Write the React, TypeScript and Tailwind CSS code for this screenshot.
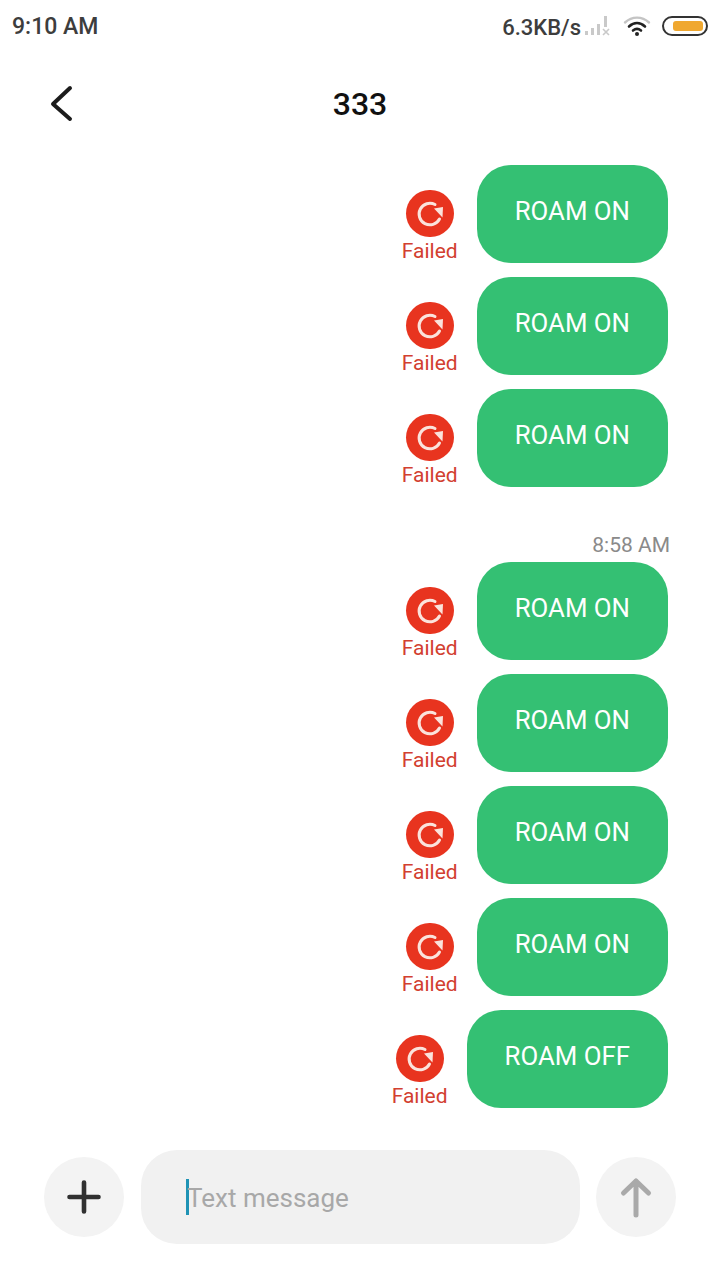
function RetryIcon() {
  return (
    <div className="w-12 h-12 rounded-full bg-[#e8341f] flex items-center justify-center">
      <svg width="32" height="32" viewBox="0 0 32 32" fill="none">
        <path d="M25.500 21A10.800 10.800 0 1 1 21 6.500" stroke="#fbe3dc" strokeWidth="3" strokeLinecap="round" />
        <path d="M20 10.500L29 9L28.500 19.500Z" fill="#fbe3dc" />
      </svg>
    </div>
  );
}

function Message({ text }: { text: string }) {
  return (
    <div className="flex justify-end items-start gap-[19px]">
      <div className="flex flex-col items-center w-14 h-[98px] pt-[25px]">
        <RetryIcon />
        <span className="mt-[2px] text-[21px] leading-[24px] text-[#d24030]">Failed</span>
      </div>
      <div className="h-[98px] px-[38px] pb-[5px] rounded-[34px] bg-[#34c073] text-white text-[25.800px] flex items-center">
        {text}
      </div>
    </div>
  );
}

export default function App() {
  return (
    <div className="w-[720px] h-[1280px] bg-white flex flex-col font-['Roboto',sans-serif] overflow-hidden">
      <div className="h-[52px] pl-3 pr-3 flex items-center justify-between text-[#3d3d3d] font-medium text-[23px]">
        <span className="pt-[2px]">9:10 AM</span>
        <div className="flex items-center gap-[11px]">
          <div className="flex items-center gap-[3px] text-[22px]">
            <span className="pt-[2px]">6.3KB/s</span>
            <svg width="28" height="22" viewBox="0 0 28 22" fill="#c9c9c9">
              <rect x="1" y="16" width="3" height="4" />
              <rect x="7" y="13" width="3" height="7" />
              <rect x="13" y="9" width="3" height="11" />
              <rect x="20" y="1" width="3" height="11" />
              <path d="M19 14l6 6M25 14l-6 6" stroke="#c9c9c9" strokeWidth="1.600" />
            </svg>
          </div>
          <svg width="28" height="22" viewBox="0 0 28 22" fill="none" strokeLinecap="round">
            <path d="M2 7.500C9 1 19 1 26 7.500" stroke="#c4c4c4" strokeWidth="2.400" />
            <path d="M6 11.500C11 7 17 7 22 11.500" stroke="#222222" strokeWidth="2.600" />
            <path d="M10 15.500C12.500 13.500 15.500 13.500 18 15.500" stroke="#222222" strokeWidth="2.600" />
            <circle cx="14" cy="19" r="2" fill="#222222" />
          </svg>
          <div className="w-[46px] h-[20px] rounded-full border-2 border-[#333333] p-[3px] pl-[9px] flex">
            <div className="flex-1 rounded-[3px] bg-[#f0a830]" />
          </div>
        </div>
      </div>

      <div className="h-[104px] relative flex items-center justify-center">
        <svg className="absolute left-[46px] top-[30px]" width="32" height="40" viewBox="0 0 32 40" fill="none">
          <path d="M24 6L7 22L24 37" stroke="#1c1c1c" strokeWidth="4" strokeLinecap="round" strokeLinejoin="round" />
        </svg>
        <span className="text-[32px] font-medium text-[#111111]">333</span>
      </div>

      <div className="h-[1124px] pt-[9px] pr-[52px] flex flex-col">
        <div className="flex flex-col gap-[14px]">
          <Message text="ROAM ON" />
          <Message text="ROAM ON" />
          <Message text="ROAM ON" />
        </div>
        <div className="mt-[44px] mb-[2px] -mr-[2px] h-[29px] text-right text-[21px] leading-[29px] text-[#8a8a8a]">8:58 AM</div>
        <div className="flex flex-col gap-[14px]">
          <Message text="ROAM ON" />
          <Message text="ROAM ON" />
          <Message text="ROAM ON" />
          <Message text="ROAM ON" />
          <Message text="ROAM OFF" />
        </div>
        <div className="mt-[42px] -mr-[52px] pl-[44px] pr-[44px] flex items-center gap-[17px]">
          <div className="w-20 h-20 rounded-full bg-[#f3f3f3] flex items-center justify-center">
            <svg width="36" height="36" viewBox="0 0 36 36" fill="none">
              <path d="M18 3.500V32.500M3.500 18H32.500" stroke="#303030" strokeWidth="4.600" strokeLinecap="round" />
            </svg>
          </div>
          <div className="w-[439px] h-[94px] rounded-[36px] bg-[#f1f1f1] pl-[45px] flex items-center">
            <div className="w-[3px] h-[36px] bg-[#1f93b5]" />
            <span className="text-[26px] text-[#a8a8a8] -ml-[2px] pt-[2px]">Text message</span>
          </div>
          <div className="ml-[-1px] w-20 h-20 rounded-full bg-[#f3f3f3] flex items-center justify-center">
            <svg width="40" height="42" viewBox="0 0 40 42" fill="none">
              <path d="M20 39V5M7.500 17L20 5L32.500 17" stroke="#a9a9a9" strokeWidth="5" strokeLinecap="round" strokeLinejoin="round" />
            </svg>
          </div>
        </div>
      </div>
    </div>
  );
}
